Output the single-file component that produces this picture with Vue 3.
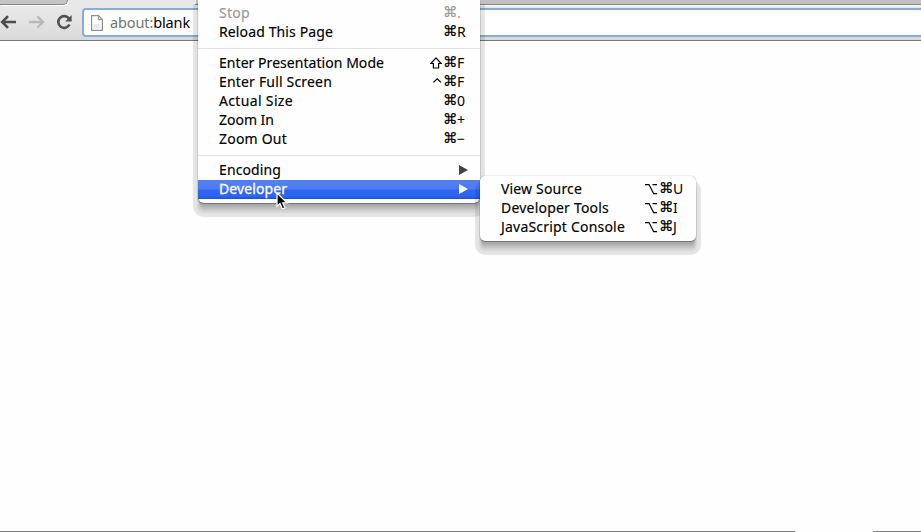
<script setup>
const groups = [
  [
    { label: 'Stop', key: '.', width: 31, disabled: true },
    { label: 'Reload This Page', key: 'R', width: 114 },
  ],
  [
    { label: 'Enter Presentation Mode', mod: 'shift', key: 'F', width: 165 },
    { label: 'Enter Full Screen', mod: 'control', key: 'F', width: 113 },
    { label: 'Actual Size', key: '0', width: 74 },
    { label: 'Zoom In', key: '+', width: 55 },
    { label: 'Zoom Out', key: '−', width: 68 },
  ],
  [
    { label: 'Encoding', submenu: true, width: 62 },
    { label: 'Developer', submenu: true, active: true, width: 68 },
  ],
]
const developer = [
  { label: 'View Source', key: 'U', width: 81 },
  { label: 'Developer Tools', key: 'I', width: 108 },
  { label: 'JavaScript Console', key: 'J', width: 124 },
]

// Spreads the letters of each label so that it fills its measured width.
const vFit = {
  mounted(el, { value }) {
    const natural = el.getBoundingClientRect().width
    el.style.letterSpacing = (value - natural) / el.textContent.length + 'px'
  },
}
</script>

<template>
  <div class="window">
    <header class="chrome">
      <div class="tabs"><div class="tab"></div></div>
      <div class="toolbar">
        <svg class="nav" width="76" height="24" viewBox="0 0 76 24" fill="none">
          <path d="M16 12H3M8 6.2L2.2 12L8 17.8" stroke="#4c4c4c" stroke-width="2.6" />
          <path d="M29 12H42M37.5 6.5L43 12L37.5 17.5" stroke="#b9b9b9" stroke-width="2.4" />
          <path d="M69 8.6A5.9 5.9 0 1 0 69.5 14.5" stroke="#505050" stroke-width="2.6" />
          <path d="M71.6 5V11.4H65.2Z" fill="#505050" />
        </svg>
        <div class="address">
          <svg class="page" width="12" height="16" viewBox="0 0 12 16">
            <path d="M.6.6H7.4L11.4 4.6V15.4H.6Z" fill="#fff" stroke="#8f8f8f" stroke-width="1.2" />
            <path d="M7.4.6V4.6H11.4" fill="none" stroke="#8f8f8f" />
            <path d="M2.5 9H9.5V13.5H2.5Z" fill="#e6e9ef" />
          </svg>
          <span v-fit="80" class="url"><span class="scheme">about:</span>blank</span>
        </div>
      </div>
    </header>
    <main class="content"></main>
    <footer class="edge"><i class="edge-left"></i><i class="edge-right"></i></footer>

    <nav class="menu main-menu">
      <div v-for="(group, g) in groups" :key="g" class="group">
        <div
          v-for="item in group"
          :key="item.label"
          class="item"
          :class="{ disabled: item.disabled, active: item.active }"
        >
          <span v-fit="item.width" class="label">{{ item.label }}</span>
          <svg v-if="item.submenu" class="arrow" width="9" height="10" viewBox="0 0 9 10">
            <path d="M0 0L9 5L0 10Z" fill="currentColor" />
          </svg>
          <span v-else class="shortcut">
            <svg v-if="item.mod" class="mod" width="12" height="12" viewBox="0 0 12 12">
              <path v-if="item.mod === 'shift'" d="M6 .9L11.2 6.5H8.6V11H3.4V6.5H.8Z" />
              <path v-else d="M3.4 6.4L7.2 2.8L11 6.4" />
            </svg>
            <span class="cmd">⌘</span>
            <span class="key">{{ item.key }}</span>
          </span>
        </div>
      </div>
    </nav>

    <nav class="menu sub-menu">
      <div v-for="item in developer" :key="item.label" class="item">
        <span v-fit="item.width" class="label">{{ item.label }}</span>
        <span class="shortcut">
          <svg class="mod" width="12" height="12" viewBox="0 0 12 12">
            <path d="M0 1.6H4L8.6 10.6H12M7.5 1.6H12" />
          </svg>
          <span class="cmd">⌘</span>
          <span class="key">{{ item.key }}</span>
        </span>
      </div>
    </nav>

    <svg class="cursor" width="13" height="19" viewBox="0 0 13 19">
      <path d="M1 1V14.4L4 11.7L6.4 17L9 15.8L6.7 10.8H11Z" fill="#000" stroke="#fff" stroke-width="1.3" />
    </svg>
  </div>
</template>

<style>
body {
  overflow: hidden;
  background: #fefefe;
}
</style>

<style scoped>
.window {
  position: relative;
  display: flex;
  flex-direction: column;
  width: 921px;
  height: 532px;
  overflow: hidden;
  box-sizing: border-box;
  font: 14px/19px 'Noto Sans', sans-serif;
  color: #000;
  background: #fefefe;
}
.chrome {
  flex: none;
  height: 41px;
  box-sizing: border-box;
  border-bottom: 1px solid #777;
  background: linear-gradient(#ebebeb, #e2e2e2 60%, #d9d9d9);
}
.tabs {
  height: 5px;
  box-sizing: border-box;
  border-bottom: 1px solid;
  border-image: linear-gradient(90deg, #e8e8e8 196px, #858585 196px) 1;
  background: linear-gradient(90deg, #e8e8e8 196px, #c1c1c1 196px);
}
.tab {
  width: 68px;
  height: 5px;
  box-sizing: border-box;
  border: solid #858585;
  border-width: 0 1px 1px 0;
  border-radius: 0 0 5px 0;
  background: #c4c4c4;
  box-shadow: 1px 1px 0 #fff;
}
.toolbar {
  display: flex;
  align-items: flex-start;
  height: 35px;
  padding-top: 3px;
  box-sizing: border-box;
  background: linear-gradient(90deg, transparent 480px, #fff 480px) top / 100% 1px no-repeat;
}
.nav {
  flex: none;
  margin-top: 2px;
}
.address {
  flex: 1;
  display: flex;
  align-items: center;
  height: 29px;
  margin: 0 -10px 0 6px;
  padding-left: 7px;
  box-sizing: border-box;
  border: 2px solid #86aed6;
  border-radius: 4px;
  background: #fff;
}
.page {
  flex: none;
  margin-right: 7px;
}
.url {
  flex: none;
  font-size: 14.5px;
}
.scheme {
  color: #6d756d;
}
.content {
  flex: 1;
}
.edge {
  display: flex;
  justify-content: space-between;
  height: 1px;
}
.edge-left {
  width: 795px;
  background: #808080;
}
.edge-right {
  width: 48px;
  background: #808080;
}
.menu {
  position: absolute;
  box-sizing: border-box;
  padding: 4px 0;
  background: #fefefe;
  border-radius: 5px;
  box-shadow:
    0 0 1px rgba(0, 0, 0, 0.45),
    0 1px 1px rgba(0, 0, 0, 0.3),
    0 5px 2px -1px rgba(0, 0, 0, 0.1),
    0 8px 2px -1px rgba(0, 0, 0, 0.1),
    0 9px 1px 1px rgba(0, 0, 0, 0.06),
    0 9px 1px 5px rgba(0, 0, 0, 0.1);
}
.main-menu {
  left: 198px;
  top: 0;
  width: 282px;
  height: 203px;
  border-radius: 0 0 6px 6px;
}
.sub-menu {
  left: 480px;
  top: 176px;
  width: 216px;
  height: 65px;
}
.group + .group {
  margin-top: 6px;
  padding-top: 5px;
  border-top: 1px solid #e2e2e2;
}
.item {
  display: flex;
  align-items: center;
  justify-content: space-between;
  height: 19px;
  padding: 0 12px 2px 21px;
  box-sizing: border-box;
  white-space: nowrap;
}
.disabled {
  color: #999;
}
.active {
  color: #fff;
  background: linear-gradient(#5480f4, #4d7af2 48%, #2f68f5 52%, #2b62ee 88%, #1751d8);
}
.active .label {
  -webkit-text-stroke: 0.3px #fff;
}
.label {
  flex: none;
  -webkit-text-stroke: 0.15px currentColor;
}
.arrow {
  color: #444;
  margin-top: 1px;
}
.active .arrow {
  color: #fff;
}
.shortcut {
  display: flex;
  flex: none;
  align-items: center;
  margin-right: -1px;
}
.mod {
  margin: 1px 1px 0 0;
  fill: none;
  stroke: #000;
  stroke-width: 1.2;
}
.cmd {
  width: 14px;
  font-family: 'DejaVu Sans', sans-serif;
  font-size: 14.5px;
  -webkit-text-stroke: 0.2px currentColor;
}
.key {
  width: 12px;
}
.sub-menu .mod {
  margin-right: 2px;
}
.cursor {
  position: absolute;
  left: 276px;
  top: 192px;
}
</style>
